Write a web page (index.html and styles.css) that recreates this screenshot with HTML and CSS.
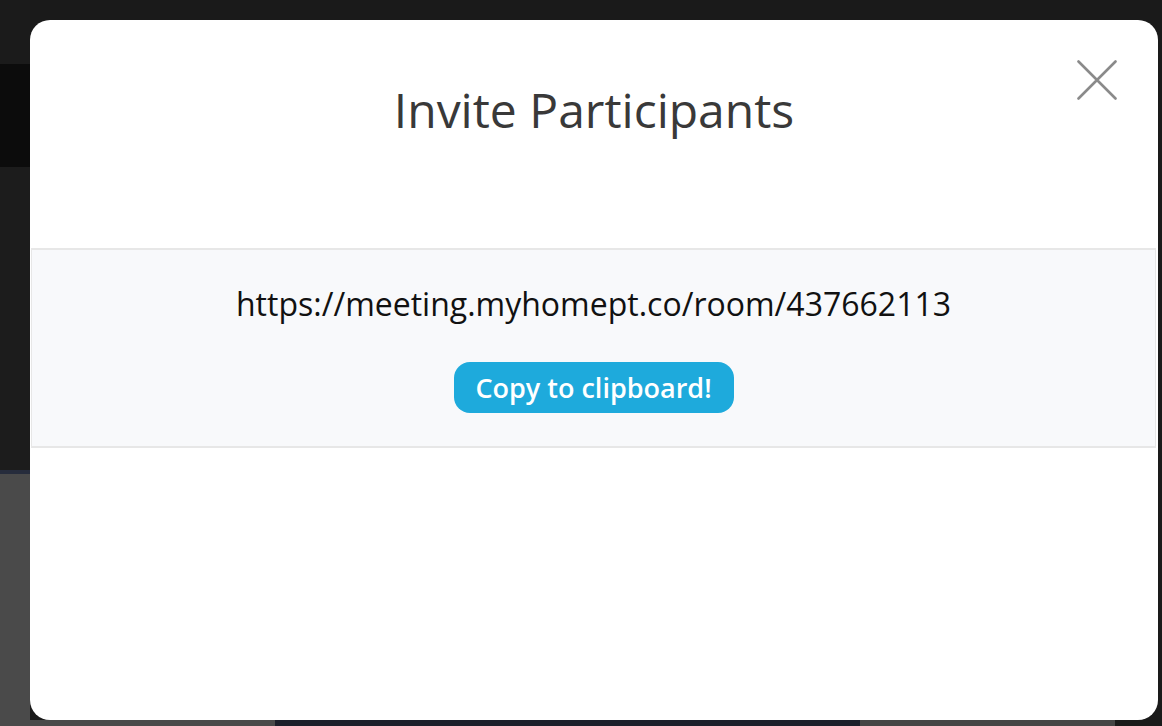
FILE: index.html
```html
<!DOCTYPE html>
<html lang="en">
<head>
<meta charset="utf-8">
<title>Invite Participants</title>
<link rel="stylesheet" href="styles.css">
</head>
<body>
<div class="modal">
  <button class="close" aria-label="Close">
    <svg width="40" height="40" viewBox="0 0 40 40"><path d="M1.5 1.5 L38.5 38.5 M38.5 1.5 L1.5 38.5" stroke="#8a8a8a" stroke-width="2.6" stroke-linecap="round" fill="none"/></svg>
  </button>
  <header class="modal-header">
    <h1 class="title">Invite Participants</h1>
  </header>
  <section class="invite-band">
    <p class="invite-link">https://meeting.myhomept.co/room/437662113</p>
    <button class="copy-btn">Copy to clipboard!</button>
  </section>
</div>
</body>
</html>
```

FILE: styles.css
```css
html, body {
  margin: 0;
  padding: 0;
  height: 100%;
}

body {
  font-family: "Open Sans", "Noto Sans", sans-serif;
  background:
    linear-gradient(to bottom, #1b1b1b 0 64px, #0c0c0c 64px 167px, #1c1c1c 167px 470px, #262c3c 470px 474px, #4a4a4a 474px) left top / 30px 100% no-repeat,
    linear-gradient(to right, #4a4a4a 0 275px, #1c1f2a 275px 860px, #454545 860px 1115px, #1a1a1a 1115px) left bottom / 100% 6px no-repeat,
    #1a1a1a;
  padding: 20px 4px 6px 30px;
  box-sizing: border-box;
}

.modal {
  position: relative;
  width: 1128px;
  height: 700px;
  background: #ffffff;
  border-radius: 20px;
  overflow: hidden;
}

.close {
  position: absolute;
  top: 40px;
  right: 41px;
  width: 40px;
  height: 40px;
  padding: 0;
  border: 0;
  background: transparent;
  display: flex;
}

.modal-header {
  height: 228px;
  padding-top: 57px;
  box-sizing: border-box;
}

.title {
  margin: 0;
  text-align: center;
  font-size: 48px;
  font-weight: 500;
  line-height: 66px;
  color: #393939;
}

.invite-band {
  margin: 0 2px 0 1px;
  height: 200px;
  box-sizing: border-box;
  border: 1px solid #e7e7e7;
  border-top-width: 2px;
  border-bottom-width: 2px;
  background: #f8f9fb;
  display: flex;
  flex-direction: column;
  align-items: center;
  padding-top: 32px;
}

.invite-link {
  margin: 0;
  font-size: 32px;
  line-height: 44px;
  color: #111111;
}

.copy-btn {
  margin-top: 36px;
  width: 280px;
  height: 51px;
  border: 0;
  border-radius: 16px;
  background: #1eaadc;
  color: #ffffff;
  font-family: "Open Sans", "Noto Sans", sans-serif;
  font-size: 27px;
  font-weight: 600;
  line-height: 38px;
  padding: 0;
}
```
